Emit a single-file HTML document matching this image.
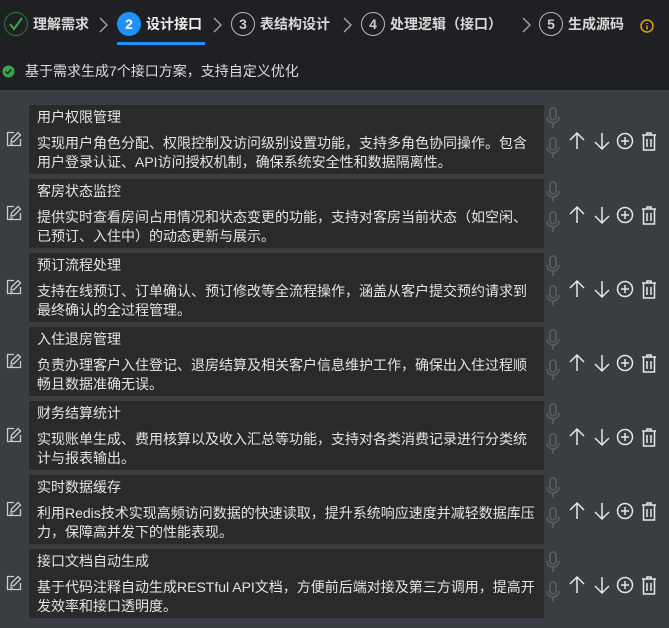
<!DOCTYPE html>
<html><head><meta charset="utf-8"><style>
*{margin:0;padding:0;box-sizing:border-box}
body{width:669px;height:628px;background:#3a3d41;font-family:"Liberation Sans","Noto Sans CJK SC",sans-serif;position:relative;overflow:hidden;color:#ddd}
.hdr{position:absolute;left:0;top:0;width:669px;height:90px;background:#1f2024}
.a{position:absolute}
.st{position:absolute;top:11px;height:26px;display:flex;align-items:center;font-size:14px;font-weight:bold;color:#d8d8d8}
.c{width:24px;height:24px;border-radius:50%;border:1.5px solid #bbb;display:flex;align-items:center;justify-content:center;font-size:14px;font-weight:bold;color:#ccc;margin-right:5px}
.chev{position:absolute;top:16px}
.card{position:absolute;left:29px;width:515px;height:69px;background:#2a2a2a;padding:3px 8px 0 8px;font-size:14px;line-height:19px;color:#e4e4e4}
.card .t{margin-bottom:7px;height:19px}
</style></head><body>
<div class="hdr">
 <div class="st" style="left:4px"><div class="c" style="border-color:#2e7d3a"><svg width="16" height="16" viewBox="0 0 16 16"><path d="M2 8l4 5 8-11" fill="none" stroke="#3aa54a" stroke-width="2"/></svg></div>理解需求</div>
 <svg class="chev" style="left:98px" width="12" height="18"><path d="M2 2l7 7-7 7" fill="none" stroke="#aaa" stroke-width="1.3"/></svg>
 <div class="st" style="left:117px;color:#eee"><div class="c" style="background:#1e90ff;border-color:#1e90ff;color:#fff">2</div>设计接口</div>
 <div class="a" style="left:117px;top:42px;width:88px;height:3px;background:#1e90ff"></div>
 <svg class="chev" style="left:212px" width="12" height="18"><path d="M2 2l7 7-7 7" fill="none" stroke="#aaa" stroke-width="1.3"/></svg>
 <div class="st" style="left:231px"><div class="c">3</div>表结构设计</div>
 <svg class="chev" style="left:342px" width="12" height="18"><path d="M2 2l7 7-7 7" fill="none" stroke="#aaa" stroke-width="1.3"/></svg>
 <div class="st" style="left:361px"><div class="c">4</div>处理逻辑（接口）</div>
 <svg class="chev" style="left:521px" width="12" height="18"><path d="M2 2l7 7-7 7" fill="none" stroke="#aaa" stroke-width="1.3"/></svg>
 <div class="st" style="left:539px"><div class="c">5</div>生成源码</div>
 <svg class="a" style="left:640px;top:19px" width="14" height="14"><circle cx="7" cy="7" r="6" fill="none" stroke="#e6a200" stroke-width="1.5"/><path d="M7 4v1M7 6.5v4" stroke="#e6a200" stroke-width="1.5"/></svg>
 <svg class="a" style="left:2px;top:65px" width="13" height="13"><circle cx="6.5" cy="6.5" r="6" fill="#3aa54a"/><path d="M3.5 6.5l2 2 4-4" fill="none" stroke="#1f2024" stroke-width="1.5"/></svg>
 <div class="a" style="left:25px;top:61px;font-size:14px;color:#ddd">基于需求生成7个接口方案，支持自定义优化</div>
</div>
<div id="list"></div>
<script>
var d=[["用户权限管理","实现用户角色分配、权限控制及访问级别设置功能，支持多角色协同操作。包含用户登录认证、API访问授权机制，确保系统安全性和数据隔离性。"],
["客房状态监控","提供实时查看房间占用情况和状态变更的功能，支持对客房当前状态（如空闲、已预订、入住中）的动态更新与展示。"],
["预订流程处理","支持在线预订、订单确认、预订修改等全流程操作，涵盖从客户提交预约请求到最终确认的全过程管理。"],
["入住退房管理","负责办理客户入住登记、退房结算及相关客户信息维护工作，确保出入住过程顺畅且数据准确无误。"],
["财务结算统计","实现账单生成、费用核算以及收入汇总等功能，支持对各类消费记录进行分类统计与报表输出。"],
["实时数据缓存","利用Redis技术实现高频访问数据的快速读取，提升系统响应速度并减轻数据库压力，保障高并发下的性能表现。"],
["接口文档自动生成","基于代码注释自动生成RESTful API文档，方便前后端对接及第三方调用，提高开发效率和接口透明度。"]];
var h="";
var mic='<svg width="14" height="22" viewBox="0 0 14 22"><rect x="4" y="1" width="6" height="12" rx="3" fill="none" stroke="#5e6164" stroke-width="1.5"/><path d="M1 10a6 6 0 0 0 12 0M7 16v5" fill="none" stroke="#5e6164" stroke-width="1.5"/></svg>';
for(var i=0;i<7;i++){var y=105+i*74;
h+='<div class="card" style="top:'+y+'px"><div class="t">'+d[i][0]+'</div><div>'+d[i][1]+'</div></div>';
h+='<div class="a" style="left:546px;top:'+(y+2)+'px">'+mic+'</div><div class="a" style="left:546px;top:'+(y+32)+'px">'+mic+'</div>';
var cy=y+35;
h+='<svg class="a" style="left:6px;top:'+(cy-9)+'px" width="16" height="16" viewBox="0 0 16 16"><path d="M8 1.5H1.5v13h13V8" fill="none" stroke="#ccc" stroke-width="1.3"/><path d="M5 11l.5-3L12 1.5l2.5 2.5L8 10.5z M4 13h3" fill="none" stroke="#ccc" stroke-width="1.3"/></svg>';
h+='<svg class="a" style="left:568px;top:'+(cy-9)+'px" width="95" height="20" viewBox="0 0 95 20"><g fill="none" stroke="#e6e6e6" stroke-width="1.5"><path d="M9 18V2M2 9l7-7 7 7"/><path d="M34 2v16M27 11l7 7 7-7"/><circle cx="57" cy="10" r="7.5"/><path d="M57 6v8M53 10h8"/><path d="M74 4h14M79 4V2h4v2M75.5 4v15h11V4M79 8v8M83 8v8"/></g></svg>';
}
document.getElementById("list").innerHTML=h;
</script>
</body></html>
